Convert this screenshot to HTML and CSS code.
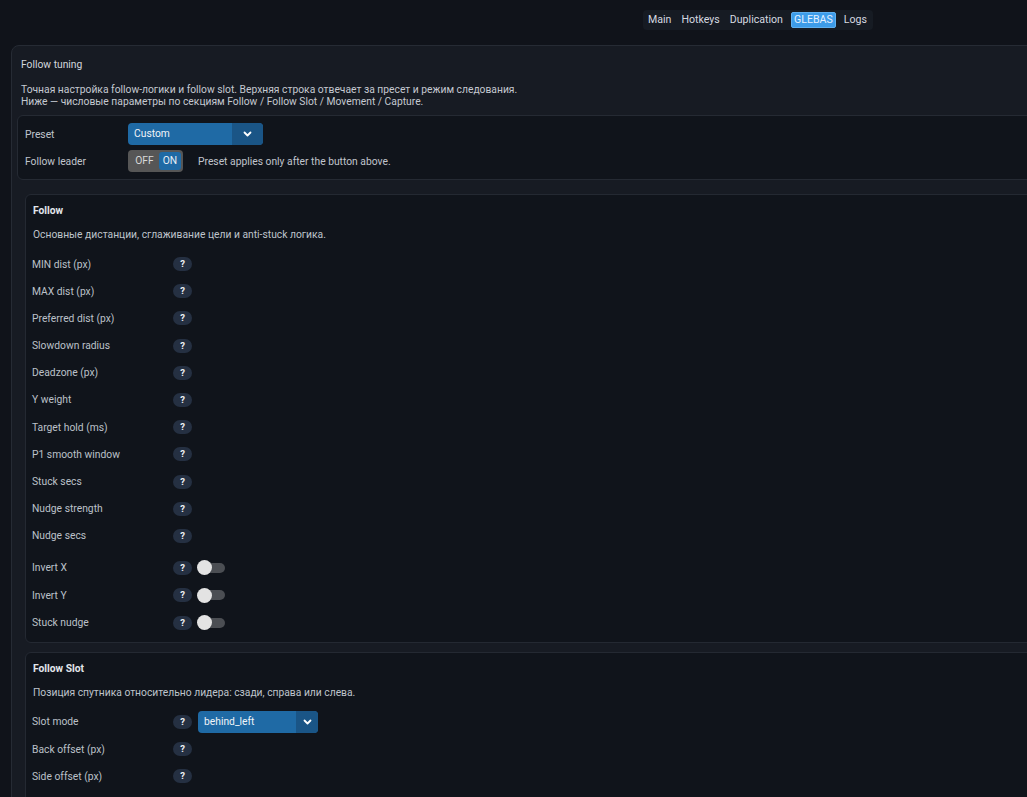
FILE: index.html
```html
<!DOCTYPE html>
<html lang="ru">
<head>
<meta charset="utf-8">
<title>Follow tuning</title>
<link rel="stylesheet" href="styles.css">
</head>
<body>
<header class="topbar">
  <nav class="tabs">
    <span class="tab">Main</span>
    <span class="tab">Hotkeys</span>
    <span class="tab">Duplication</span>
    <span class="tab active">GLEBAS</span>
    <span class="tab">Logs</span>
  </nav>
</header>

<main class="panel">
  <div class="panel-title">Follow tuning</div>
  <p class="panel-desc">Точная настройка follow-логики и follow slot. Верхняя строка отвечает за пресет и режим следования.<br>Ниже — числовые параметры по секциям Follow / Follow Slot / Movement / Capture.</p>

  <div class="preset-box">
    <div class="prow">
      <span class="plabel">Preset</span>
      <div class="select select-preset"><span class="sel-text">Custom</span><span class="sel-arrow"><svg width="9" height="6" viewBox="0 0 9 6"><path d="M1.5 1.5 L4.5 4.5 L7.5 1.5" fill="none" stroke="#fff" stroke-width="1.8" stroke-linecap="round" stroke-linejoin="round"/></svg></span></div>
    </div>
    <div class="prow">
      <span class="plabel">Follow leader</span>
      <div class="seg"><span class="seg-item">OFF</span><span class="seg-item on">ON</span></div>
      <span class="hint">Preset applies only after the button above.</span>
    </div>
  </div>

  <div class="sections">
    <section class="sec">
      <div class="sec-title">Follow</div>
      <div class="sec-desc">Основные дистанции, сглаживание цели и anti-stuck логика.</div>
      <div class="rows">
        <div class="row"><span class="lbl">MIN dist (px)</span><span class="q">?</span></div>
        <div class="row"><span class="lbl">MAX dist (px)</span><span class="q">?</span></div>
        <div class="row"><span class="lbl">Preferred dist (px)</span><span class="q">?</span></div>
        <div class="row"><span class="lbl">Slowdown radius</span><span class="q">?</span></div>
        <div class="row"><span class="lbl">Deadzone (px)</span><span class="q">?</span></div>
        <div class="row"><span class="lbl">Y weight</span><span class="q">?</span></div>
        <div class="row"><span class="lbl">Target hold (ms)</span><span class="q">?</span></div>
        <div class="row"><span class="lbl">P1 smooth window</span><span class="q">?</span></div>
        <div class="row"><span class="lbl">Stuck secs</span><span class="q">?</span></div>
        <div class="row"><span class="lbl">Nudge strength</span><span class="q">?</span></div>
        <div class="row"><span class="lbl">Nudge secs</span><span class="q">?</span></div>
      </div>
      <div class="rows toggles">
        <div class="row"><span class="lbl">Invert X</span><span class="q">?</span><span class="switch"><span class="knob"></span></span></div>
        <div class="row"><span class="lbl">Invert Y</span><span class="q">?</span><span class="switch"><span class="knob"></span></span></div>
        <div class="row"><span class="lbl">Stuck nudge</span><span class="q">?</span><span class="switch"><span class="knob"></span></span></div>
      </div>
    </section>

    <section class="sec sec-last">
      <div class="sec-title">Follow Slot</div>
      <div class="sec-desc">Позиция спутника относительно лидера: сзади, справа или слева.</div>
      <div class="rows">
        <div class="row"><span class="lbl">Slot mode</span><span class="q">?</span><div class="select select-slot"><span class="sel-text">behind_left</span><span class="sel-arrow"><svg width="9" height="6" viewBox="0 0 9 6"><path d="M1.5 1.5 L4.5 4.5 L7.5 1.5" fill="none" stroke="#fff" stroke-width="1.8" stroke-linecap="round" stroke-linejoin="round"/></svg></span></div></div>
        <div class="row"><span class="lbl">Back offset (px)</span><span class="q">?</span></div>
        <div class="row"><span class="lbl">Side offset (px)</span><span class="q">?</span></div>
      </div>
    </section>
  </div>
</main>
</body>
</html>
```

FILE: styles.css
```css
* { box-sizing: border-box; }
html, body { margin: 0; padding: 0; }
body {
  background: #10131a;
  font-family: Roboto, "Noto Sans", "Liberation Sans", sans-serif;
  font-size: 10.3px;
  color: #c3c8d0;
  overflow: hidden;
  width: 1027px;
  height: 797px;
}
.topbar {
  height: 45px;
  padding: 10px 0 0 643px;
}
.tabs {
  display: inline-flex;
  align-items: center;
  gap: 6px;
  background: #161b23;
  border-radius: 4px;
  padding: 2px 4px 2px 3px;
  height: 20px;
  font-size: 10.6px;
}
.tab {
  color: #d5d9e0;
  padding: 0 2px;
  line-height: 16px;
  border-radius: 2px;
}
.tab.active {
  background: #3d9ce9;
  color: #e4f0ff;
  padding: 0 2px;
  border: 1px solid #5fb0f0;
  line-height: 14px;
}
.panel {
  margin-left: 11px;
  width: 1120px;
  background: #171b23;
  border: 1px solid #262b34;
  border-radius: 8px;
  padding: 13px 5px 20px 5px;
}
.panel-title {
  margin-left: 4px;
  line-height: 12px;
  color: #d3d7de;
}
.panel-desc {
  margin: 13px 0 0 4px;
  line-height: 12px;
  color: #c5c9d1;
}
.preset-box {
  margin-top: 7px;
  background: #10141b;
  border: 1px solid #252a33;
  border-radius: 6px;
  padding: 7px 7px 7px 7px;
  display: flex;
  flex-direction: column;
  gap: 5px;
}
.prow {
  display: flex;
  align-items: center;
  height: 22px;
}
.plabel {
  width: 103px;
  color: #c0c5cd;
}
.select {
  display: flex;
  height: 22px;
  background: #1f6aa5;
  border-radius: 4px;
  overflow: hidden;
  color: #f0f4f8;
}
.sel-text {
  flex: 1;
  padding-left: 6px;
  line-height: 22px;
}
.sel-arrow {
  width: 31px;
  background: #1a5586;
  display: flex;
  align-items: center;
  justify-content: center;
}
.select-preset { width: 135px; }
.select-slot { width: 120px; }
.select-slot .sel-arrow { width: 22px; }
.seg {
  display: flex;
  align-items: center;
  width: 55px;
  height: 22px;
  background: #565656;
  border-radius: 4px;
  padding: 2px;
}
.seg-item {
  flex: 1;
  text-align: center;
  line-height: 18px;
  color: #d8d8d8;
  border-radius: 3px;
}
.seg-item.on {
  flex: 0 0 22px;
  background: #1f6aa5;
  color: #e8eef5;
}
.hint {
  margin-left: 15px;
  color: #c0c5cd;
}
.sections {
  margin-top: 14px;
  padding-left: 8px;
  display: flex;
  flex-direction: column;
  gap: 9px;
}
.sec {
  background: #10141b;
  border: 1px solid #242932;
  border-radius: 6px;
  padding: 10px 7px 8px 6px;
}
.sec-last {
  padding-bottom: 40px;
}
.sec-title {
  font-weight: bold;
  color: #e2e6ec;
  line-height: 12px;
  padding-left: 1px;
}
.sec-desc {
  margin-top: 12px;
  line-height: 12px;
  color: #bfc4cc;
  padding-left: 1px;
}
.rows {
  margin-top: 12px;
  display: flex;
  flex-direction: column;
  gap: 5.2px;
}
.rows.toggles {
  margin-top: 10px;
  gap: 5.5px;
}
.row {
  display: flex;
  align-items: center;
  height: 22px;
}
.lbl {
  width: 141px;
  color: #bcc1c9;
}
.q {
  width: 19px;
  height: 14px;
  border-radius: 7px;
  background: #253042;
  color: #eef1f5;
  font-weight: bold;
  font-size: 9.5px;
  line-height: 14px;
  text-align: center;
  margin-right: 6px;
}
.switch {
  position: relative;
  width: 27px;
  height: 10px;
  background: #4b4e53;
  border-radius: 5px;
}
.knob {
  position: absolute;
  left: -1px;
  top: -2.5px;
  width: 15px;
  height: 15px;
  border-radius: 50%;
  background: #e3e3e3;
}
```
